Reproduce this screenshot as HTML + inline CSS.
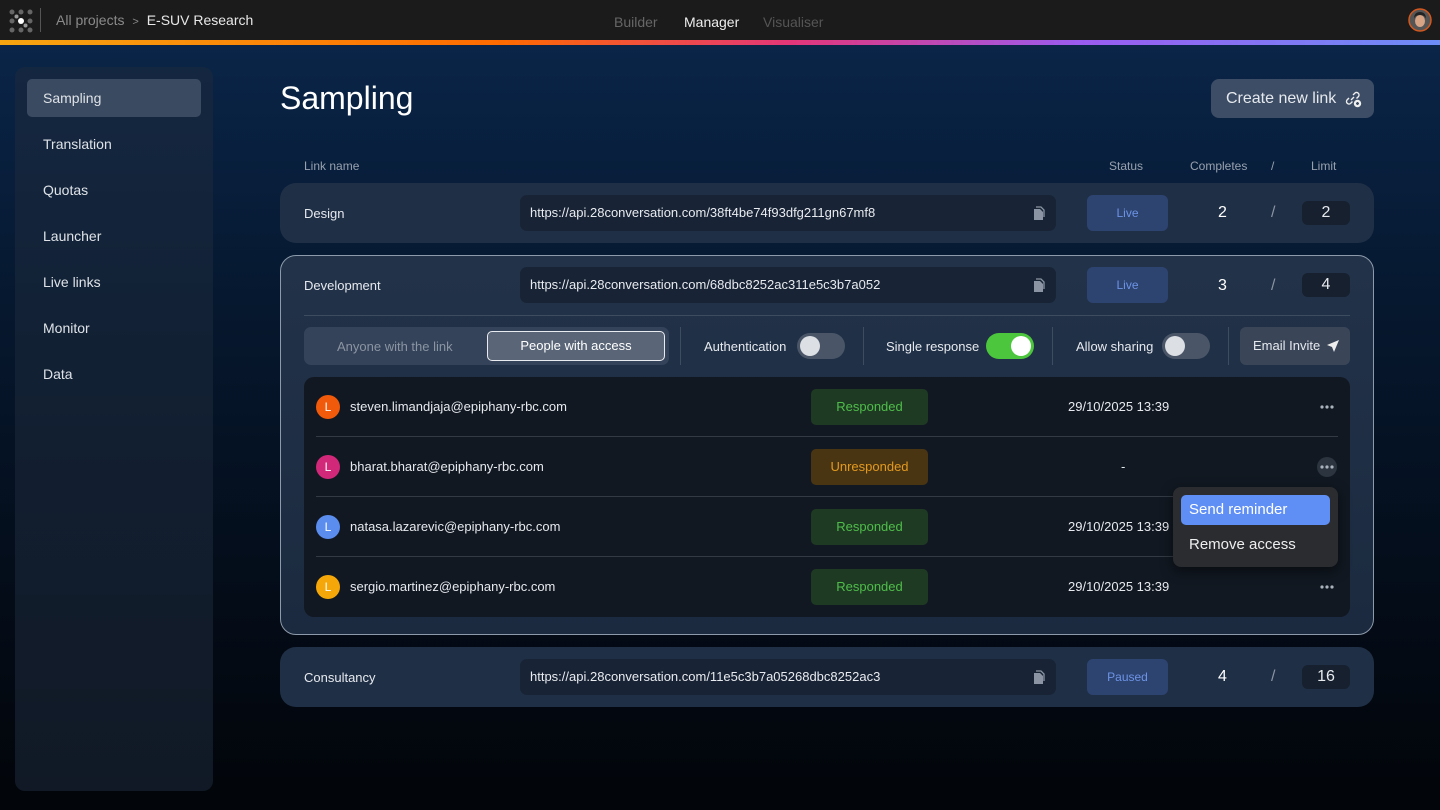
<!DOCTYPE html>
<html><head><meta charset="utf-8"><style>
*{box-sizing:border-box;margin:0;padding:0}
body{width:1440px;height:810px;overflow:hidden;font-family:"Liberation Sans",sans-serif;color:#e6e9ee;background:linear-gradient(180deg,#0a2548 45px,#06182f 300px,#040c18 600px,#020509 810px);position:relative}
.top{position:absolute;left:0;top:0;width:1440px;height:40px;background:#1b1b1b}
.stripe{position:absolute;left:0;top:40px;width:1440px;height:5px;background:linear-gradient(90deg,#f7a511,#ff6a00 35%,#e3367a 55%,#9b5cf0 75%,#6d8df7)}
.abs{position:absolute}
.side{position:absolute;left:15px;top:67px;width:198px;height:724px;background:rgba(30,42,60,.55);border-radius:10px}
.side div{height:38px;line-height:38px;padding-left:16px;margin:0 12px 8px;font-size:14px;color:#dfe3e8;border-radius:5px}
.side .act{background:#3a4a60;margin-top:12px}
.card{position:absolute;left:280px;width:1094px;background:#1f2f46;border-radius:16px}
.url{position:absolute;left:240px;width:536px;height:36px;background:#182335;border-radius:7px;font-size:13px;line-height:36px;padding-left:10px;color:#e8ebef}
.url svg{position:absolute;right:10px;top:11px}
.stat{position:absolute;left:807px;width:81px;height:36px;background:#2d4470;border-radius:6px;color:#6e93e6;font-size:12px;text-align:center;line-height:36px}
.n{position:absolute;font-size:16px;color:#fff}
.lim{position:absolute;left:1022px;width:48px;height:24px;background:#16202e;border-radius:6px;text-align:center;line-height:24px;font-size:16px}
.name{position:absolute;left:24px;font-size:13px}
.row{position:absolute;left:12px;width:1022px;height:60px}
.av{position:absolute;left:0;top:18px;width:24px;height:24px;border-radius:50%;font-size:12px;text-align:center;line-height:24px;color:#fff}
.em{position:absolute;left:34px;top:22px;font-size:13px}
.badge{position:absolute;left:495px;top:12px;width:117px;height:36px;border-radius:5px;text-align:center;line-height:36px;font-size:13px}
.g{background:#1e3a23;color:#4fbd4a}
.o{background:#4a3513;color:#e39a1e}
.dt{position:absolute;left:752px;top:22px;font-size:13px}
.dots{position:absolute;left:1004px;top:28px}
.tog{position:absolute;top:6px;width:48px;height:26px;border-radius:13px;background:#4a5668}
.tog i{position:absolute;top:3px;width:20px;height:20px;border-radius:50%;background:#dcdfe4}
.vs{position:absolute;top:0;width:1px;height:38px;background:#3e4c60}
.tl{position:absolute;top:12px;font-size:13px}
</style></head><body>
<div class="top"></div><div class="stripe"></div>
<svg class="abs" style="left:8px;top:8px" width="26" height="26" viewBox="0 0 26 26"><g fill="#666"><circle cx="4" cy="4" r="2.5"/><circle cx="13" cy="4" r="2.5"/><circle cx="22" cy="4" r="2.5"/><circle cx="4" cy="13" r="2.5"/><circle cx="22" cy="13" r="2.5"/><circle cx="4" cy="22" r="2.5"/><circle cx="13" cy="22" r="2.5"/><circle cx="22" cy="22" r="2.5"/><circle cx="8.5" cy="8.5" r="2" fill="#999"/><circle cx="17.5" cy="17.5" r="2" fill="#999"/></g><circle cx="13" cy="13" r="3" fill="#fff"/></svg>
<div class="abs" style="left:40px;top:8px;width:1px;height:24px;background:#555"></div>
<div class="abs" style="left:56px;top:12px;font-size:14px;color:#8a8a8a">All projects <span style="font-size:11px;margin:0 4px">&gt;</span> <span style="color:#e8e8e8">E-SUV Research</span></div>
<div class="abs" style="left:614px;top:14px;font-size:14px;color:#666">Builder</div>
<div class="abs" style="left:684px;top:14px;font-size:14px;color:#eee">Manager</div>
<div class="abs" style="left:763px;top:14px;font-size:14px;color:#555">Visualiser</div>
<svg class="abs" style="left:1408px;top:8px" width="24" height="24" viewBox="0 0 24 24"><circle cx="12" cy="12" r="11" fill="#555" stroke="#d2581f" stroke-width="1.5"/><ellipse cx="12" cy="13" rx="5" ry="6" fill="#d7a486"/><path d="M6 11q0-7 6-7t6 7q-1-4-6-4t-6 4z" fill="#222"/></svg>

<div class="side"><div class="act">Sampling</div><div>Translation</div><div>Quotas</div><div>Launcher</div><div>Live links</div><div>Monitor</div><div>Data</div></div>

<div class="abs" style="left:280px;top:80px;font-size:32px;color:#fff">Sampling</div>
<div class="abs" style="left:1211px;top:79px;width:163px;height:39px;background:#3c4d65;border-radius:8px;font-size:16px;line-height:39px;padding-left:15px">Create new link
<svg style="position:absolute;right:12px;top:11px" width="18" height="18" viewBox="0 0 18 18" fill="none" stroke="#eee" stroke-width="1.4"><path d="M7 10l3-3M5 8l-2 2a2.5 2.5 0 003.5 3.5l2-2M9 5l2-2a2.5 2.5 0 013.5 3.5l-2 2"/><circle cx="13.5" cy="13.5" r="3" fill="#eee"/><path d="M13.5 12v3M12 13.5h3" stroke="#3c4d65"/></svg></div>

<div class="abs" style="left:304px;top:159px;font-size:12px;color:#98a1ae">Link name</div>
<div class="abs" style="left:1109px;top:159px;font-size:12px;color:#98a1ae">Status</div>
<div class="abs" style="left:1190px;top:159px;font-size:12px;color:#98a1ae">Completes</div>
<div class="abs" style="left:1271px;top:159px;font-size:12px;color:#98a1ae">/</div>
<div class="abs" style="left:1311px;top:159px;font-size:12px;color:#98a1ae">Limit</div>

<svg width="0" height="0" style="position:absolute"><defs><g id="cp"><path d="M2 3h6l3 3v8H2z" fill="#8a94a2"/><path d="M4 1h5l3 3v7" fill="none" stroke="#8a94a2" stroke-width="1.3"/></g><g id="dt" fill="#aab2bd"><circle cx="2" cy="2" r="1.6"/><circle cx="7" cy="2" r="1.6"/><circle cx="12" cy="2" r="1.6"/></g></defs></svg>

<div class="card" style="top:183px;height:60px">
<div class="name" style="top:23px">Design</div>
<div class="url" style="top:12px">https://api.28conversation.com/38ft4be74f93dfg211gn67mf8<svg width="14" height="15"><use href="#cp"/></svg></div>
<div class="stat" style="top:12px">Live</div>
<div class="n" style="left:938px;top:21px">2</div><div class="n" style="left:991px;top:21px;color:#8a94a2">/</div>
<div class="lim" style="top:18px">2</div>
</div>

<div class="card" style="top:255px;height:380px;border:1px solid #8d9aab;background:linear-gradient(180deg,#223249,#1b2a3f)">
<div class="name" style="top:22px;left:23px">Development</div>
<div class="url" style="top:11px;left:239px">https://api.28conversation.com/68dbc8252ac311e5c3b7a052<svg width="14" height="15"><use href="#cp"/></svg></div>
<div class="stat" style="top:11px;left:806px">Live</div>
<div class="n" style="left:937px;top:21px">3</div><div class="n" style="left:990px;top:21px;color:#8a94a2">/</div>
<div class="lim" style="top:17px;left:1021px">4</div>
<div class="abs" style="left:23px;top:59px;width:1046px;height:1px;background:#3e4c60"></div>
<div class="abs" style="left:23px;top:71px;width:1046px;height:38px">
 <div class="abs" style="left:0;top:0;width:365px;height:38px;background:#34435a;border-radius:7px"></div>
 <div class="abs" style="left:33px;top:12px;font-size:13px;color:#8a94a2">Anyone with the link</div>
 <div class="abs" style="left:183px;top:4px;width:178px;height:30px;background:#5a6677;border:1px solid #e8ebef;border-radius:5px;font-size:13px;text-align:center;line-height:28px;color:#fff">People with access</div>
 <div class="vs" style="left:376px"></div>
 <div class="tl" style="left:400px">Authentication</div><div class="tog" style="left:493px"><i style="left:3px"></i></div>
 <div class="vs" style="left:559px"></div>
 <div class="tl" style="left:582px">Single response</div><div class="tog" style="left:682px;background:#4cc63d"><i style="left:25px;background:#fff"></i></div>
 <div class="vs" style="left:748px"></div>
 <div class="tl" style="left:772px">Allow sharing</div><div class="tog" style="left:858px"><i style="left:3px"></i></div>
 <div class="vs" style="left:924px"></div>
 <div class="abs" style="left:936px;top:0;width:110px;height:38px;background:#3a4658;border-radius:6px;font-size:13px;line-height:38px;padding-left:13px">Email Invite
 <svg style="position:absolute;right:10px;top:12px" width="14" height="14" viewBox="0 0 14 14"><path d="M13 1L1 6l5 2 2 5z" fill="#eee"/></svg></div>
</div>
<div class="abs" style="left:23px;top:121px;width:1046px;height:240px;background:#111821;border-radius:10px">
 <div class="row" style="top:0"><div class="av" style="background:#f05a0a">L</div><div class="em">steven.limandjaja@epiphany-rbc.com</div><div class="badge g">Responded</div><div class="dt">29/10/2025 13:39</div><svg class="dots" width="14" height="4"><use href="#dt"/></svg></div>
 <div class="abs" style="left:12px;top:59px;width:1022px;height:1px;background:#333a44"></div>
 <div class="row" style="top:60px"><div class="av" style="background:#d1287a">L</div><div class="em">bharat.bharat@epiphany-rbc.com</div><div class="badge o">Unresponded</div><div class="dt" style="left:805px">-</div><div class="abs" style="left:1001px;top:20px;width:20px;height:20px;border-radius:50%;background:#2c3440"></div><svg class="dots" style="left:1004px" width="14" height="4"><use href="#dt"/></svg></div>
 <div class="abs" style="left:12px;top:119px;width:1022px;height:1px;background:#333a44"></div>
 <div class="row" style="top:120px"><div class="av" style="background:#5b8def">L</div><div class="em">natasa.lazarevic@epiphany-rbc.com</div><div class="badge g">Responded</div><div class="dt">29/10/2025 13:39</div></div>
 <div class="abs" style="left:12px;top:179px;width:1022px;height:1px;background:#333a44"></div>
 <div class="row" style="top:180px"><div class="av" style="background:#f5a70a">L</div><div class="em">sergio.martinez@epiphany-rbc.com</div><div class="badge g">Responded</div><div class="dt">29/10/2025 13:39</div><svg class="dots" width="14" height="4"><use href="#dt"/></svg></div>
</div>
</div>

<div class="abs" style="left:1173px;top:487px;width:165px;height:80px;background:#2a2c30;border-radius:8px;box-shadow:0 4px 12px rgba(0,0,0,.5)">
 <div class="abs" style="left:8px;top:8px;width:149px;height:30px;background:#5f8ff5;border-radius:5px;font-size:15px;line-height:30px;padding-left:8px;color:#fff">Send reminder</div>
 <div class="abs" style="left:16px;top:49px;font-size:15px;color:#eee">Remove access</div>
</div>

<div class="card" style="top:647px;height:60px">
<div class="name" style="top:23px">Consultancy</div>
<div class="url" style="top:12px">https://api.28conversation.com/11e5c3b7a05268dbc8252ac3<svg width="14" height="15"><use href="#cp"/></svg></div>
<div class="stat" style="top:12px">Paused</div>
<div class="n" style="left:938px;top:21px">4</div><div class="n" style="left:991px;top:21px;color:#8a94a2">/</div>
<div class="lim" style="top:18px">16</div>
</div>
</body></html>
